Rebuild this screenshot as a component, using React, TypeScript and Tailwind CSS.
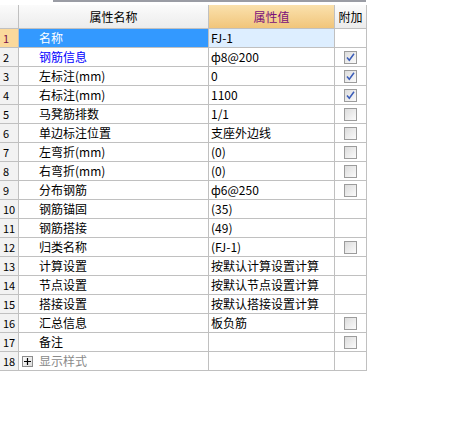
import React from "react";

type Row = { name: string; value: string; check: null | boolean; blue?: boolean };

const rows: Row[] = [
  { name: "名称", value: "FJ-1", check: null },
  { name: "钢筋信息", value: "ф8@200", check: true, blue: true },
  { name: "左标注(mm)", value: "0", check: true },
  { name: "右标注(mm)", value: "1100", check: true },
  { name: "马凳筋排数", value: "1/1", check: false },
  { name: "单边标注位置", value: "支座外边线", check: false },
  { name: "左弯折(mm)", value: "(0)", check: false },
  { name: "右弯折(mm)", value: "(0)", check: false },
  { name: "分布钢筋", value: "ф6@250", check: false },
  { name: "钢筋锚固", value: "(35)", check: null },
  { name: "钢筋搭接", value: "(49)", check: null },
  { name: "归类名称", value: "(FJ-1)", check: false },
  { name: "计算设置", value: "按默认计算设置计算", check: null },
  { name: "节点设置", value: "按默认节点设置计算", check: null },
  { name: "搭接设置", value: "按默认搭接设置计算", check: null },
  { name: "汇总信息", value: "板负筋", check: false },
  { name: "备注", value: "", check: false },
];

function Check({ checked }: { checked: boolean }) {
  return (
    <div className="w-[13px] h-[13px] border border-[#9c9c9c] bg-gradient-to-br from-[#dcdcdc] to-[#fbfbfb] flex items-center justify-center">
      {checked && (
        <svg width="11" height="11" viewBox="0 0 11 11">
          <path d="M2 5.5 L4.3 8.3 L9 1.8" stroke="#3a5cb8" strokeWidth="1.5" fill="none" />
        </svg>
      )}
    </div>
  );
}

export default function App() {
  const font = { fontFamily: '"Noto Sans CJK SC", "Noto Sans", sans-serif' };
  return (
    <div className="w-[449px] h-[440px] bg-white text-[12px] text-black" style={font}>
      <div className="flex h-[5px]">
        <div className="w-[53px]" />
        <div className="w-[313px] h-[2px] bg-[#9a9ca4]" />
      </div>
      <div className="w-[367px] border-r border-[#c0c0c0]">
        <div className="flex h-[24px] border-b border-[#c0c0c0] leading-[23px]">
          <div className="w-[19px] border-r border-[#c0c0c0] bg-gradient-to-b from-[#fbfbfb] to-[#ececec]" />
          <div className="w-[190px] border-r border-[#c0c0c0] bg-gradient-to-b from-[#fbfbfb] to-[#ececec] text-center text-[12px]">属性名称</div>
          <div className="w-[126px] border-r border-[#c0c0c0] bg-gradient-to-b from-[#fae1ad] to-[#f1c57a] text-center text-[12px] text-[#7a0f7a]">属性值</div>
          <div className="flex-1 bg-gradient-to-b from-[#fbfbfb] to-[#ececec] text-center text-[12px]">附加</div>
        </div>
        {rows.map((r, i) => {
          const sel = i === 0;
          return (
            <div key={i} className="flex h-[19px] border-b border-[#c0c0c0] leading-[18px]">
              <div className={`w-[19px] border-r border-[#c0c0c0] pl-[3px] text-[11px] ${sel ? "bg-[#fbd99c] text-[#7a0f4a]" : "bg-[#f2f2f2]"}`}>{i + 1}</div>
              <div className={`w-[190px] border-r border-[#c0c0c0] pl-[20px] ${sel ? "bg-[#3399ff] text-white" : r.blue ? "text-[#0000ff]" : ""}`}>{r.name}</div>
              <div className={`w-[126px] border-r border-[#c0c0c0] pl-[2px] ${sel ? "bg-[#ddeeff]" : ""}`}>{r.value}</div>
              <div className="flex-1 flex items-center justify-center">
                {r.check !== null && <Check checked={r.check} />}
              </div>
            </div>
          );
        })}
        <div className="flex h-[19px] border-b border-[#c0c0c0] leading-[18px]">
          <div className="w-[19px] border-r border-[#c0c0c0] pl-[3px] text-[11px] bg-[#f2f2f2]">18</div>
          <div className="w-[190px] border-r border-[#c0c0c0] flex items-center pl-[3px] gap-[6px] text-[#8a8a8a]">
            <div className="w-[11px] h-[11px] border border-[#8c8c8c] bg-gradient-to-br from-[#fafafa] to-[#dedede] flex items-center justify-center">
              <svg width="9" height="9" viewBox="0 0 9 9">
                <path d="M1 4.5 H8 M4.5 1 V8" stroke="#000" strokeWidth="1.2" />
              </svg>
            </div>
            <span>显示样式</span>
          </div>
          <div className="w-[126px] border-r border-[#c0c0c0]" />
          <div className="flex-1" />
        </div>
      </div>
    </div>
  );
}
